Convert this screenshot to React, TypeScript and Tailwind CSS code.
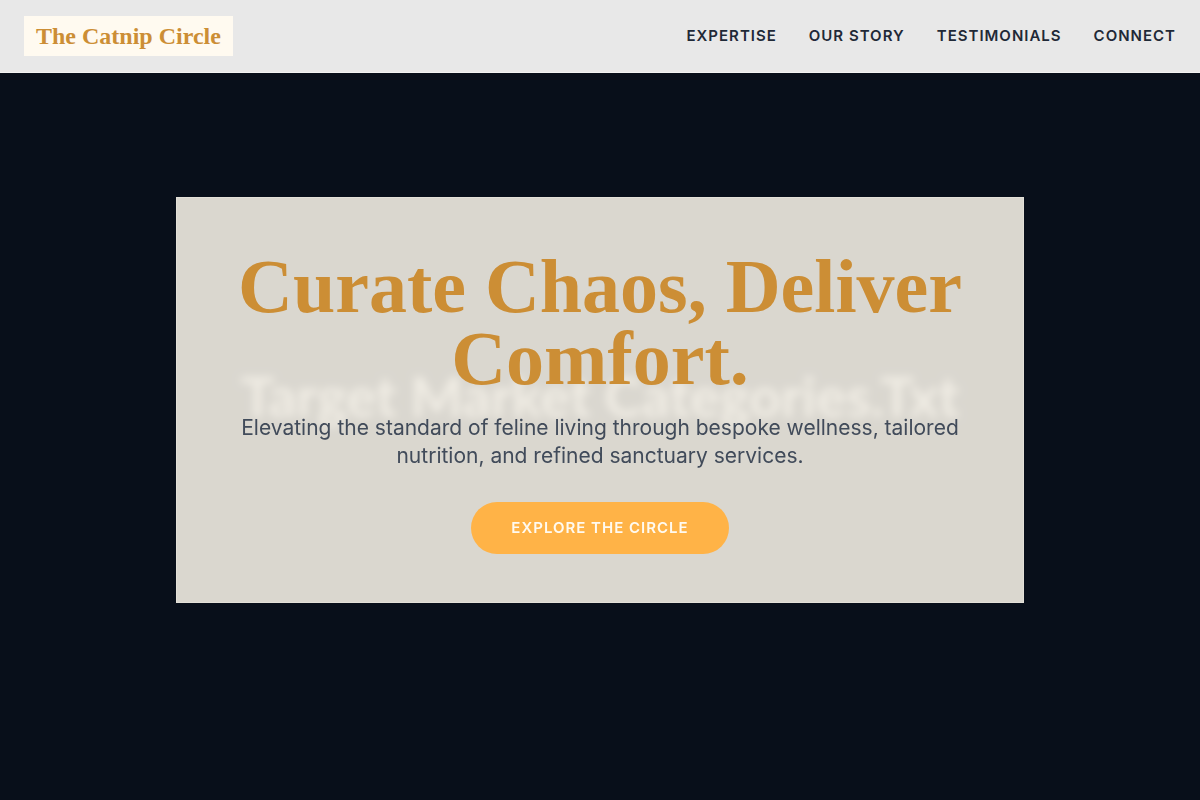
const navLinks = [
  { label: 'Expertise', href: '#expertise' },
  { label: 'Our Story', href: '#story' },
  { label: 'Testimonials', href: '#testimonials' },
  { label: 'Connect', href: '#connect' },
]

function Header() {
  return (
    <header className="fixed inset-x-0 top-0 z-20 flex flex-wrap items-center justify-between gap-x-8 gap-y-2 border-b border-[#f3f3f2] bg-[#e8e8e8] px-6 py-4">
      <a
        href="#top"
        className="bg-[#fffaf0] px-3 py-1 font-['Liberation_Serif',serif] text-2xl font-bold text-[#cc8e35]"
      >
        The Catnip Circle
      </a>
      <nav className="flex flex-wrap gap-x-8 gap-y-2">
        {navLinks.map((link) => (
          <a
            key={link.href}
            href={link.href}
            className="text-[15px] leading-5 font-semibold uppercase tracking-[1px] text-[#1f2937] hover:text-[#cc8e35]"
          >
            {link.label}
          </a>
        ))}
      </nav>
    </header>
  )
}

function Hero() {
  return (
    <section id="top" className="relative flex min-h-screen items-center justify-center px-6 py-24">
      {/* Backdrop caption, softened by the card's blur */}
      <div
        aria-hidden="true"
        className="absolute inset-0 flex items-center justify-center overflow-hidden whitespace-nowrap pb-2 font-['Lato',sans-serif] text-[56px] font-bold text-white/60"
      >
        Target Market Categories.Txt
      </div>

      <div className="relative w-full max-w-[848px] border border-[#e3e0d8] bg-[#fffaf0]/85 px-12 pt-13 pb-12 text-center backdrop-blur-xs">
        <h1 className="mb-5 font-['Liberation_Serif',serif] text-[76px] font-bold leading-[72px] text-[#cc8e35]">
          Curate Chaos, Deliver Comfort.
        </h1>
        <p className="mb-8 text-[21px] font-normal leading-7 text-[#414b5a]">
          Elevating the standard of feline living through bespoke wellness, tailored nutrition, and
          refined sanctuary services.
        </p>
        <button
          type="button"
          className="h-13 rounded-full bg-[#ffb347] px-10 text-[15px] leading-5 font-semibold uppercase tracking-[1px] text-[#fffaf0] hover:bg-[#cc8e35]"
        >
          Explore the Circle
        </button>
      </div>
    </section>
  )
}

export default function App() {
  return (
    <div className="min-h-screen bg-[#080f1a] font-['Inter',sans-serif]">
      <Header />
      <main>
        <Hero />
      </main>
    </div>
  )
}
